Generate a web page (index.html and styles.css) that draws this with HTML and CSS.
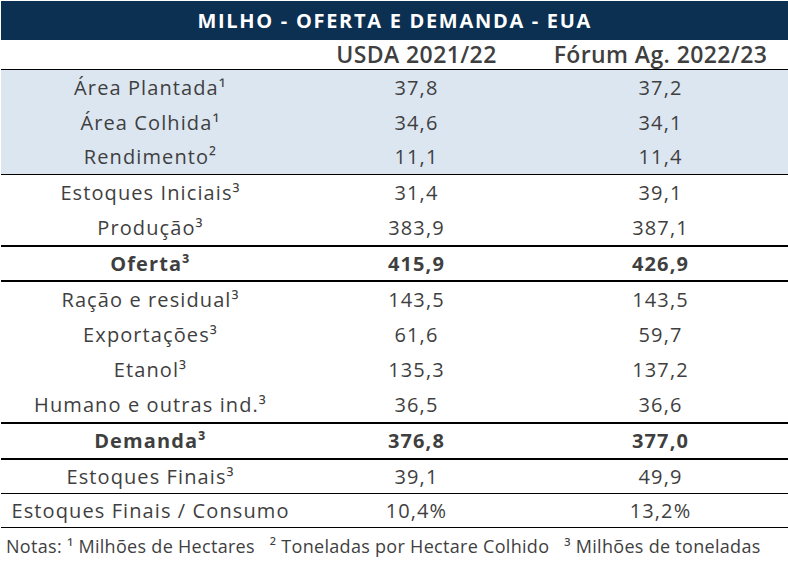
FILE: index.html
```html
<!DOCTYPE html>
<html lang="pt-BR">
<head>
<meta charset="utf-8">
<title>Milho - Oferta e Demanda - EUA</title>
<link rel="stylesheet" href="styles.css">
</head>
<body>
<div class="sheet">
  <table class="grid">
    <colgroup>
      <col class="c-label">
      <col class="c-usda">
      <col class="c-forum">
    </colgroup>
    <thead>
      <tr class="title-row"><th colspan="3">MILHO - OFERTA E DEMANDA - EUA</th></tr>
      <tr class="head-row"><th></th><th>USDA 2021/22</th><th>Fórum Ag. 2022/23</th></tr>
    </thead>
    <tbody>
      <tr class="shade"><td>Área Plantada¹</td><td>37,8</td><td>37,2</td></tr>
      <tr class="shade"><td>Área Colhida¹</td><td>34,6</td><td>34,1</td></tr>
      <tr class="shade shade-last"><td>Rendimento²</td><td>11,1</td><td>11,4</td></tr>
      <tr><td>Estoques Iniciais³</td><td>31,4</td><td>39,1</td></tr>
      <tr class="thick-below"><td>Produção³</td><td>383,9</td><td>387,1</td></tr>
      <tr class="total thick-below"><td>Oferta³</td><td>415,9</td><td>426,9</td></tr>
      <tr><td>Ração e residual³</td><td>143,5</td><td>143,5</td></tr>
      <tr><td>Exportações³</td><td>61,6</td><td>59,7</td></tr>
      <tr><td>Etanol³</td><td>135,3</td><td>137,2</td></tr>
      <tr class="thick-below"><td>Humano e outras ind.³</td><td>36,5</td><td>36,6</td></tr>
      <tr class="total total-short thick-below"><td>Demanda³</td><td>376,8</td><td>377,0</td></tr>
      <tr class="thin-below short"><td>Estoques Finais³</td><td>39,1</td><td>49,9</td></tr>
      <tr class="thin-below short"><td>Estoques Finais / Consumo</td><td>10,4%</td><td>13,2%</td></tr>
    </tbody>
  </table>
  <p class="notes">Notas: ¹ Milhões de Hectares &nbsp; ² Toneladas por Hectare Colhido &nbsp; ³ Milhões de toneladas</p>
</div>
</body>
</html>
```
FILE: styles.css
```css
html, body {
  margin: 0;
  padding: 0;
  background: #ffffff;
}

.sheet {
  width: 788px;
  padding-top: 1px;
  font-family: "Open Sans", "Lato", sans-serif;
  color: #3f3f3f;
}

.grid {
  width: 788px;
  border-collapse: collapse;
  table-layout: fixed;
}

.c-label { width: 300px; }
.c-usda { width: 232px; }
.c-forum { width: 256px; }

.grid th,
.grid td {
  padding: 0;
  text-align: center;
  vertical-align: middle;
  font-size: 20px;
  font-weight: 400;
  line-height: 1;
  letter-spacing: 1.1px;
  white-space: nowrap;
}

.title-row th {
  height: 39px;
  background: #0b3052;
  color: #ffffff;
  font-weight: 700;
  font-size: 20px;
  letter-spacing: 1.7px;
  border-left: 1px solid #ffffff;
}

.head-row th {
  height: 29px;
  font-weight: 600;
  font-size: 23px;
  letter-spacing: 0.4px;
  color: #3f3f3f;
  border-bottom: 1px solid #000000;
}

.grid tbody tr td {
  height: 35px;
}

.shade td {
  background: #dce6f1;
}

.grid tbody tr.shade-last td {
  height: 34px;
  border-bottom: 1px solid #000000;
}

.thick-below td {
  border-bottom: 2px solid #000000;
}

.total td {
  font-weight: 700;
}

.grid tbody tr.total td {
  height: 33px;
}

.grid tbody tr.total-short td {
  height: 34px;
}

.grid tbody tr.short td {
  height: 33px;
}

.thin-below td {
  border-bottom: 1px solid #000000;
}

.notes {
  margin: 0;
  padding: 8px 0 0 6px;
  font-size: 18px;
  line-height: 1.2;
  letter-spacing: 0.3px;
  white-space: nowrap;
}
```
